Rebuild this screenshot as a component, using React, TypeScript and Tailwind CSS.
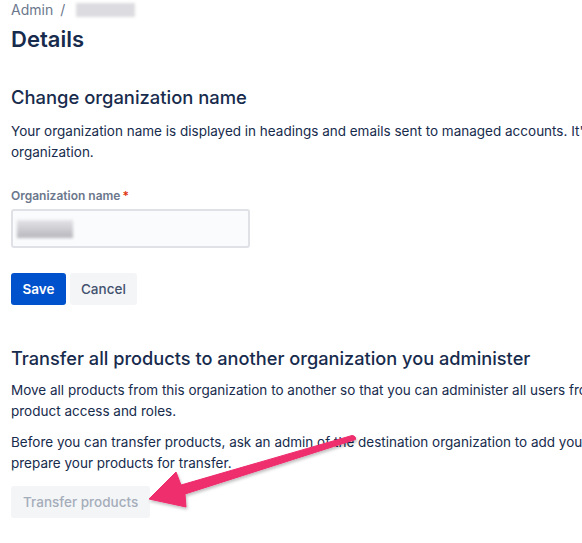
export default function App() {
  return (
    <div className="relative h-[543px] w-[582px] overflow-hidden bg-white font-['Inter',sans-serif] text-[#172B4D]">
      <div className="w-[900px] pl-[11px] pt-0">
        {/* breadcrumb */}
        <div className="flex h-[20px] items-center gap-[7px] text-[14px] leading-[20px] text-[#6B778C]">
          <span>Admin</span>
          <span>/</span>
          <span className="ml-[4px] h-[14px] w-[59px] bg-[#dcdce0] blur-[1.5px]" />
        </div>
        <h1 className="mt-[6px] text-[22px] font-semibold leading-[26px]">Details</h1>

        <section className="mt-[33px]">
          <h2 className="text-[18.4px] font-medium leading-[24px]">Change organization name</h2>
          <p className="mt-[12px] whitespace-nowrap text-[13.5px] leading-[21px]">
            Your organization name is displayed in headings and emails sent to managed accounts. It's also used to identify this
            <br />
            organization.
          </p>

          <label className="mt-[25px] block text-[12px] font-semibold leading-[16px] text-[#6B778C]">
            Organization name<span className="ml-[2px] text-[#DE350B]">*</span>
          </label>
          <div className="mt-[5px] flex h-[39px] w-[239px] items-center rounded-[3px] border-2 border-[#DFE1E6] bg-[#FAFBFC] px-[4px]">
            <div className="h-[18px] w-[56px] bg-gradient-to-b from-[#e4e4e8] to-[#b6b6bc] blur-[1.5px]" />
          </div>

          <div className="mt-[25px] flex gap-[4px]">
            <button className="h-[32px] rounded-[3px] bg-[#0052CC] px-[11.5px] text-[13.5px] font-semibold text-white">Save</button>
            <button className="h-[32px] rounded-[3px] bg-[#F4F5F7] px-[11px] text-[13.5px] font-medium text-[#42526E]">Cancel</button>
          </div>
        </section>

        <section className="mt-[41px]">
          <h2 className="text-[18.2px] font-medium leading-[24px]">Transfer all products to another organization you administer</h2>
          <p className="mt-[10px] whitespace-nowrap text-[13.5px] leading-[21px]">
            Move all products from this organization to another so that you can administer all users from one place and manage their
            <br />
            product access and roles.
          </p>
          <p className="mt-[10px] whitespace-nowrap text-[13.5px] leading-[21px]">
            Before you can transfer products, ask an admin of the destination organization to add you as an admin. Then you can
            <br />
            prepare your products for transfer.
          </p>
          <button
            disabled
            className="mt-[12px] h-[32px] rounded-[3px] bg-[#F4F5F7] px-[12px] text-[13.5px] font-medium text-[#A5ADBA]"
          >
            Transfer products
          </button>
        </section>
      </div>

      {/* annotation arrow */}
      <svg className="pointer-events-none absolute left-0 top-0" width="582" height="543" viewBox="0 0 582 543">
        <defs>
          <filter id="sh" x="-10%" y="-10%" width="130%" height="140%">
            <feDropShadow dx="1" dy="2" stdDeviation="1.5" floodColor="#000" floodOpacity="0.25" />
          </filter>
        </defs>
        <path
          d="M352 435.5 Q356 436 355.5 439.5 L185 494 L186 507 L149 499 L176 472 L181 485 Z"
          fill="#EF2D6D"
          stroke="#EF2D6D"
          strokeWidth="1"
          strokeLinejoin="round"
          filter="url(#sh)"
        />
      </svg>
    </div>
  )
}
